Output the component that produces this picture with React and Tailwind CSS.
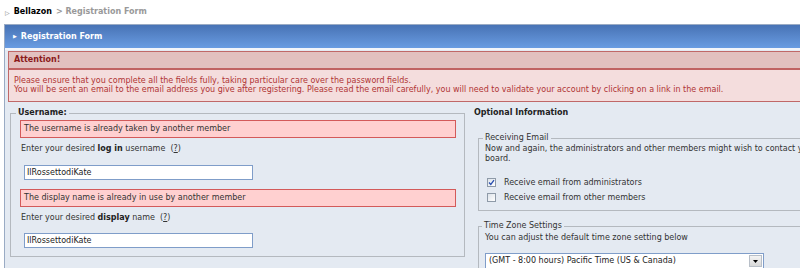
export default function App() {
  return (
    <div className="w-[800px] h-[268px] overflow-hidden bg-white font-['DejaVu_Sans',Verdana,sans-serif] text-[#333]">
      <div className="w-[960px]">
        {/* breadcrumb */}
        <div className="h-[24px] flex items-center pl-[5px] text-[8px] font-bold">
          <span className="text-[#777] text-[6px] mr-[4px] font-normal">▷</span>
          <span className="text-black">Bellazon</span>
          <span className="text-[#999] ml-[4px]">&gt; Registration Form</span>
        </div>

        <div className="ml-[4px] border-l border-t border-[#9aabc4] bg-[#e4eaf2] pb-[20px]">
          <div className="h-[23px] bg-gradient-to-b from-[#4873b5] to-[#699ce2] flex items-center pl-[8px] text-white text-[8px] font-bold">
            <span className="text-[5px] mr-[4px]">▶</span>Registration Form
          </div>
          <div className="h-[2px] bg-[#f2f5fa]" />

          {/* attention */}
          <div className="ml-[3px] mt-[1px] border border-[#c06868] bg-[#f4dddd]">
            <div className="h-[18px] bg-[#e2c0bf] border-b-2 border-[#c06262] flex items-center pl-[5px] text-[8px] font-bold text-[#8a1a1a]">
              Attention!
            </div>
            <div className="pl-[5px] pt-[6px] pb-[7px] text-[8px] leading-[9px] text-[#b03434]">
              <div>Please ensure that you complete all the fields fully, taking particular care over the password fields.</div>
              <div>You will be sent an email to the email address you give after registering. Please read the email carefully, you will need to validate your account by clicking on a link in the email.</div>
            </div>
          </div>

          <div className="flex mt-[5px]">
            {/* left column */}
            <div className="w-[460px] shrink-0 pl-[5px]">
              <fieldset className="border border-[#b4b9bf] pl-[9px] pr-[8px] pb-[8px] pt-[1px]">
                <legend className="px-[2px] -ml-[4px] text-[8px] leading-[12px] font-bold text-[#222]">Username:</legend>
                <div className="h-[18px] border border-[#d35a5a] bg-[#ffd0d0] flex items-center pl-[3px] text-[8px] text-[#333]">
                  The username is already taken by another member
                </div>
                <div className="mt-[5px] h-[12px] leading-[12px] text-[8px] pl-[1px]">
                  Enter your desired <b className="text-[#222]">log in</b> username&nbsp; (<span className="underline">?</span>)
                </div>
                <div className="mt-[10px] ml-[4px] w-[229px] h-[15px] border border-[#7f9dc9] bg-white flex items-center pl-[2px] text-[8px] text-[#222]">
                  IlRossettodiKate
                </div>
                <div className="mt-[9px] h-[18px] border border-[#d35a5a] bg-[#ffd0d0] flex items-center pl-[3px] text-[8px] text-[#333]">
                  The display name is already in use by another member
                </div>
                <div className="mt-[5px] h-[12px] leading-[12px] text-[8px] pl-[1px]">
                  Enter your desired <b className="text-[#222]">display</b> name&nbsp; (<span className="underline">?</span>)
                </div>
                <div className="mt-[9px] ml-[4px] w-[229px] h-[15px] border border-[#7f9dc9] bg-white flex items-center pl-[2px] text-[8px] text-[#222]">
                  IlRossettodiKate
                </div>
              </fieldset>
            </div>

            {/* right column */}
            <div className="flex-1 pl-[9px]">
              <div className="h-[12px] leading-[12px] text-[8px] font-bold text-[#222]">Optional Information</div>
              <fieldset className="mt-[13px] ml-[4px] border border-[#b4b9bf] pl-[6px] pb-[5px]">
                <legend className="px-[2px] -ml-[2px] text-[8px] leading-[12px] text-[#333]">Receiving Email</legend>
                <div className="text-[8px] leading-[9.5px] w-[440px]">
                  Now and again, the administrators and other members might wish to contact you via email through this board.
                </div>
                <div className="mt-[12px] flex flex-col">
                  <label className="h-[15px] flex items-center text-[8px]">
                    <span className="ml-[2px] mr-[8px] w-[9px] h-[9px] border border-[#8e9aa8] bg-gradient-to-br from-[#dde3ea] to-white flex items-center justify-center">
                      <svg width="7" height="7" viewBox="0 0 7 7"><path d="M1 3.5 L2.8 5.5 L6 1.2" fill="none" stroke="#2a4fb0" strokeWidth="1.3" /></svg>
                    </span>
                    Receive email from administrators
                  </label>
                  <label className="h-[15px] flex items-center text-[8px]">
                    <span className="ml-[2px] mr-[8px] w-[9px] h-[9px] border border-[#8e9aa8] bg-gradient-to-br from-[#dde3ea] to-white" />
                    Receive email from other members
                  </label>
                </div>
              </fieldset>

              <fieldset className="mt-[9px] ml-[4px] border border-[#b4b9bf] pl-[6px] pb-[10px]">
                <legend className="px-[2px] -ml-[3px] text-[8px] leading-[12px] text-[#333]">Time Zone Settings</legend>
                <div className="mt-[1px] text-[8px] leading-[10px]">You can adjust the default time zone setting below</div>
                <div className="mt-[10px] w-[279px] h-[16px] border border-[#7f9dc9] bg-white flex items-center justify-between text-[8px] text-[#222]">
                  <span className="pl-[3px]">(GMT - 8:00 hours) Pacific Time (US &amp; Canada)</span>
                  <span className="w-[13px] h-[12px] mr-[1px] border border-[#b8bfc8] bg-gradient-to-b from-[#f4f4f4] to-[#d8d8d8] flex items-center justify-center">
                    <svg width="5" height="3" viewBox="0 0 5 3"><path d="M0 0 H5 L2.5 3 Z" fill="#000" /></svg>
                  </span>
                </div>
              </fieldset>
            </div>
          </div>
        </div>
      </div>
    </div>
  );
}
